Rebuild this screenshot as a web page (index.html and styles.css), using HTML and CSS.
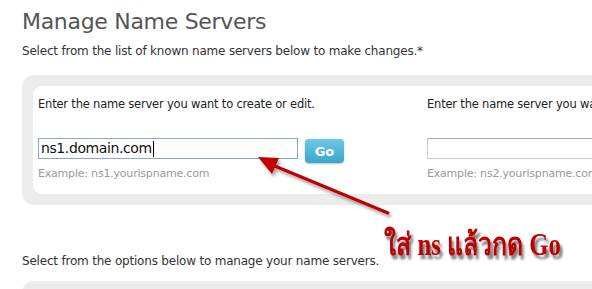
FILE: index.html
```html
<!DOCTYPE html>
<html lang="en">
  <head>
    <meta charset="UTF-8" />
    <title>Manage Name Servers</title>
    <link rel="stylesheet" href="styles.css">
  </head>
  <body>
    <div class="page">
      <h1>Manage Name Servers</h1>
      <p class="intro">Select from the list of known name servers below to make changes.*</p>

      <div class="panel">
        <div class="panel-inner">
          <div class="ns-col">
            <label for="ns1">Enter the name server you want to create or edit.</label>
            <div class="ns-row">
              <div class="ns-input active"><span>ns1.domain.com</span><i class="caret"></i></div>
              <button class="go">Go</button>
            </div>
            <p class="example">Example: ns1.yourispname.com</p>
          </div>
          <div class="ns-col">
            <label for="ns2">Enter the name server you want to create or edit.</label>
            <div class="ns-row">
              <div class="ns-input"></div>
              <button class="go">Go</button>
            </div>
            <p class="example">Example: ns2.yourispname.com</p>
          </div>
        </div>
      </div>

      <p class="intro options">Select from the options below to manage your name servers.</p>
      <div class="panel bottom"></div>
    </div>

    <!-- пометка поверх скриншота -->
    <svg class="arrow" width="592" height="289" viewBox="0 0 592 289">
      <defs>
        <filter id="sh" x="-20%" y="-20%" width="140%" height="140%">
          <feDropShadow dx="2" dy="3" stdDeviation="1.5" flood-color="#000" flood-opacity="0.35" />
        </filter>
      </defs>
      <g filter="url(#sh)">
        <line x1="388" y1="213" x2="270" y2="164" stroke="#c00000" stroke-width="3" stroke-linecap="round" />
        <polygon points="258,157 279,158 272,174" fill="#c00000" />
      </g>
    </svg>
    <div class="note">ใส่ ns แล้วกด Go</div>
  </body>
</html>
```

FILE: styles.css
```css
* {
  margin: 0;
  padding: 0;
  box-sizing: border-box;
}

body {
  width: 592px;
  height: 289px;
  overflow: hidden;
  background: #fff;
  font-family: "DejaVu Sans", Verdana, sans-serif;
  color: #333;
  position: relative;
}

.page {
  padding: 8px 0 0 22px;
}

h1 {
  font-size: 22px;
  font-weight: normal;
  color: #555;
  line-height: 28px;
  letter-spacing: -0.3px;
}

.intro {
  font-size: 12px;
  margin-top: 7px;
  line-height: 16px;
  letter-spacing: -0.2px;
}

.panel {
  margin-top: 16px;
  width: 640px;
  background: #ececec;
  border-radius: 12px;
  padding: 11px;
}

.panel-inner {
  background: #fff;
  border-radius: 9px;
  height: 108px;
  display: flex;
  gap: 83px;
  padding: 11px 0 0 5px;
}

.ns-col label {
  display: block;
  font-size: 11.5px;
  color: #222;
  line-height: 14px;
  letter-spacing: -0.2px;
}

.ns-row {
  display: flex;
  align-items: flex-start;
  gap: 7px;
  margin-top: 27px;
}

.ns-input {
  width: 260px;
  height: 21px;
  border: 1px solid #ccc;
  border-top-color: #aaa;
  padding: 0 2px;
  font-size: 14px;
  letter-spacing: -0.4px;
  line-height: 19px;
  color: #111;
  display: flex;
  align-items: center;
}

.ns-input.active {
  border-color: #82a9cf;
}

.caret {
  display: inline-block;
  width: 1px;
  height: 16px;
  margin-left: 1px;
  background: #000;
}

.go {
  width: 39px;
  height: 24px;
  margin-top: 1px;
  border: none;
  border-radius: 4px;
  background: linear-gradient(#6cc8e6, #3aa7cc);
  box-shadow: 0 1px 2px rgba(0, 0, 0, 0.25);
  color: #fff;
  font-family: "DejaVu Sans", sans-serif;
  font-weight: bold;
  font-size: 13px;
}

.example {
  font-size: 11px;
  color: #999;
  margin-top: 4px;
  letter-spacing: -0.2px;
}

.options {
  margin-top: 48px;
}

.panel.bottom {
  height: 30px;
  margin-top: 12px;
}

.arrow {
  position: absolute;
  left: 0;
  top: 0;
}

.note {
  position: absolute;
  left: 384px;
  top: 219px;
  font-family: "Liberation Serif", "DejaVu Serif", serif;
  font-style: normal;
  font-weight: bold;
  font-size: 31px;
  color: #c00000;
  text-shadow: 3px 4px 3px rgba(0, 0, 0, 0.55);
  white-space: nowrap;
  transform: scaleX(0.8);
  transform-origin: left top;
}
```
